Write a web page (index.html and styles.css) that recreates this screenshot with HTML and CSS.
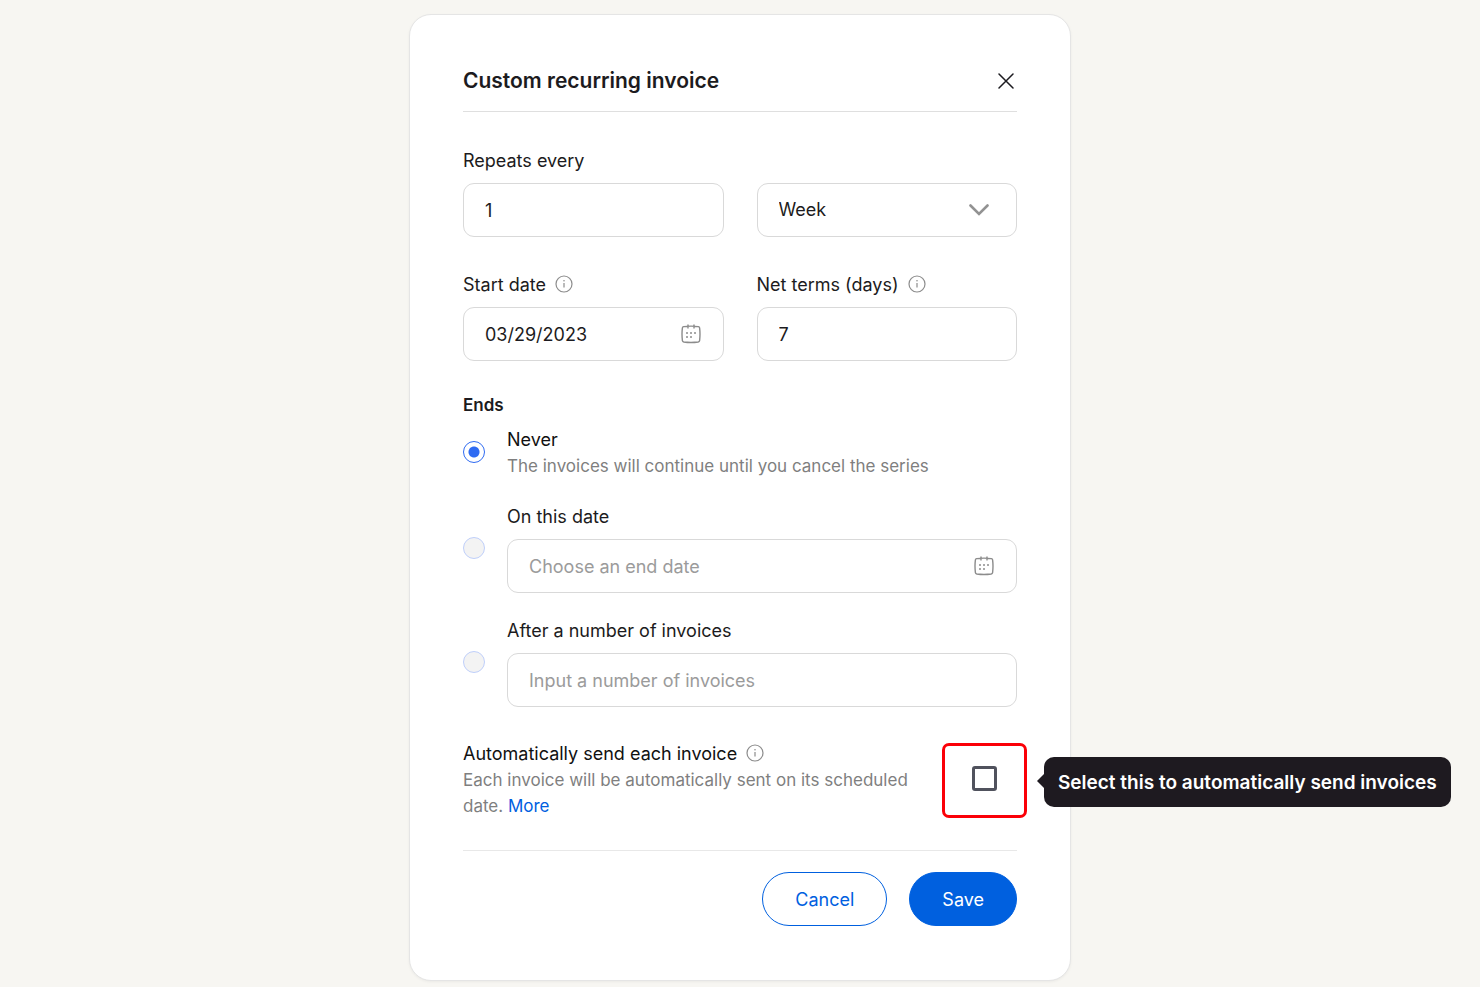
FILE: index.html
```html
<!DOCTYPE html>
<html lang="en">
<head>
    <meta charset="UTF-8">
    <meta name="viewport" content="width=device-width, initial-scale=1.0">
    <title>Custom recurring invoice</title>
    <link rel="stylesheet" href="styles.css">
</head>
<body>
    <svg class="sprite" aria-hidden="true">
        <symbol id="info" viewBox="0 0 18 18">
            <circle cx="9" cy="9" r="8" fill="none" stroke="currentColor" stroke-width="1.2"/>
            <path d="M9 8v4.6" stroke="currentColor" stroke-width="1.2"/>
            <circle cx="9" cy="5.8" r=".8" fill="currentColor"/>
        </symbol>
        <symbol id="calendar" viewBox="0 0 20 20">
            <path d="M2.6 2.6Q10 1.6 17.4 2.6Q18.4 2.8 18.6 3.8Q19.4 10 18.6 16.6Q18.4 17.8 17.2 18Q10 19 2.8 18Q1.6 17.8 1.4 16.6Q.6 10 1.4 3.8Q1.6 2.8 2.6 2.6ZM7 .5v4M13 .5v4" fill="none" stroke="currentColor" stroke-width="1.4"/>
            <g fill="currentColor">
                <circle cx="6" cy="9" r="1"/>
                <circle cx="10" cy="9" r="1"/>
                <circle cx="14" cy="9" r="1"/>
                <circle cx="6" cy="13" r="1"/>
                <circle cx="10" cy="13" r="1"/>
            </g>
        </symbol>
    </svg>

    <form class="modal">
        <header>
            <h1>Custom recurring invoice</h1>
            <button type="button" class="close" aria-label="Close">
                <svg width="16" height="16" viewBox="0 0 16 16"><path d="M1 1l14 14M15 1L1 15" stroke="currentColor" stroke-width="1.5" stroke-linecap="round"/></svg>
            </button>
        </header>

        <div class="row">
            <div class="field">
                <label for="every">Repeats every</label>
                <div class="box"><input type="text" id="every" value="1"></div>
            </div>
            <div class="field">
                <div class="box select-box">
                    <select id="unit" aria-label="Repeat unit">
                        <option>Week</option>
                        <option>Month</option>
                    </select>
                    <svg class="chevron" width="20" height="12" viewBox="0 0 20 12"><path d="M1.5 1.5L10 10l8.5-8.5" fill="none" stroke="currentColor" stroke-width="2.6" stroke-linecap="round"/></svg>
                </div>
            </div>
        </div>

        <div class="row">
            <div class="field">
                <label for="start">Start date <svg class="info"><use href="#info"/></svg></label>
                <div class="box">
                    <input type="text" id="start" value="03/29/2023">
                    <svg class="calendar"><use href="#calendar"/></svg>
                </div>
            </div>
            <div class="field">
                <label for="terms">Net terms (days) <svg class="info"><use href="#info"/></svg></label>
                <div class="box"><input type="text" id="terms" value="7"></div>
            </div>
        </div>

        <fieldset>
            <legend>Ends</legend>

            <div class="option">
                <input type="radio" name="ends" id="never" checked>
                <div class="text">
                    <label for="never">Never</label>
                    <p>The invoices will continue until you cancel the series</p>
                </div>
            </div>

            <div class="option">
                <input type="radio" name="ends" id="on-date" aria-label="On this date" disabled>
                <div class="field">
                    <label for="end-date">On this date</label>
                    <div class="box">
                        <input type="text" id="end-date" placeholder="Choose an end date">
                        <svg class="calendar"><use href="#calendar"/></svg>
                    </div>
                </div>
            </div>

            <div class="option">
                <input type="radio" name="ends" id="after" aria-label="After a number of invoices" disabled>
                <div class="field">
                    <label for="count">After a number of invoices</label>
                    <div class="box"><input type="text" id="count" placeholder="Input a number of invoices"></div>
                </div>
            </div>
        </fieldset>

        <div class="auto">
            <div class="text">
                <label for="auto-send">Automatically send each invoice <svg class="info"><use href="#info"/></svg></label>
                <p>Each invoice will be automatically sent on its scheduled date. <a href="#">More</a></p>
            </div>
            <div class="highlight">
                <input type="checkbox" id="auto-send">
                <div class="tooltip" role="tooltip">Select this to automatically send invoices</div>
            </div>
        </div>

        <footer>
            <button type="button" class="cancel">Cancel</button>
            <button type="submit" class="save">Save</button>
        </footer>
    </form>
</body>
</html>
```
FILE: styles.css
```css
* {
    box-sizing: border-box;
    padding: 0;
    margin: 0;
}

body {
    background: #f7f6f2;
    color: #1c1b20;
    font: 18px/24px Inter, "Liberation Sans", sans-serif;
    padding: 14px 0 6px;
}

input,
select,
button {
    font: inherit;
    color: inherit;
    background: none;
    border: none;
}

.sprite {
    display: none;
}

.modal {
    max-width: 662px;
    margin: auto;
    padding: 52px 53px 54px;
    background: #fff;
    border: 1px solid #e5e5e5;
    border-radius: 22px;
    box-shadow: 0 1px 3px rgba(0, 0, 0, .05);
}

header {
    display: flex;
    justify-content: space-between;
    align-items: center;
    padding-bottom: 16px;
    margin-bottom: 37px;
    border-bottom: 1px solid #dfdfdf;
}

h1 {
    font-size: 21px;
    font-weight: 600;
    line-height: 28px;
}

.close {
    display: flex;
    padding: 3px;
    cursor: pointer;
}

.row {
    display: flex;
    align-items: flex-end;
    gap: 33px;
    margin-bottom: 36px;
}

.field {
    flex: 1;
    min-width: 0;
}

.field label {
    display: block;
    margin-bottom: 10px;
}

.box {
    display: flex;
    align-items: center;
    height: 54px;
    padding-right: 22px;
    border: 1px solid #d9d9d9;
    border-radius: 11px;
}

.box input,
.box select {
    flex: 1;
    min-width: 0;
    height: 100%;
    padding-left: 21px;
    appearance: none;
}

::placeholder {
    color: #9b9b9b;
    opacity: 1;
}

.select-box {
    position: relative;
    padding-right: 0;
}

.chevron {
    position: absolute;
    right: 27px;
    color: #929292;
    pointer-events: none;
}

.info {
    width: 18px;
    height: 18px;
    margin-left: 4px;
    vertical-align: -2px;
    color: #8c8c8c;
}

.calendar {
    width: 20px;
    height: 20px;
    color: #8c8c8c;
}

fieldset {
    display: flex;
    flex-direction: column;
    gap: 26px;
    border: none;
    margin: -4px 0 34px;
}

legend {
    font-size: 17px;
    font-weight: 600;
    margin-bottom: 10px;
}

.option {
    display: flex;
    align-items: center;
    gap: 22px;
}

input[type="radio"] {
    appearance: none;
    width: 22px;
    height: 22px;
    margin-bottom: 3px;
    border: 1px solid #2f6bf2;
    border-radius: 50%;
}

input[type="radio"]:checked {
    background: radial-gradient(circle, #2f6bf2 5px, #fff 6px);
}

input[type="radio"]:disabled {
    background: #f3f3f3;
    border-color: #bfcffa;
}

.text {
    flex: 1;
    font-size: 17px;
    line-height: 26px;
    color: #7f7f7f;
}

.text label {
    font-size: 18px;
    color: #111;
}

.auto {
    display: flex;
    align-items: center;
    gap: 24px;
    margin-bottom: 31px;
}

a {
    color: #0060df;
    text-decoration: none;
}

.highlight {
    position: relative;
    display: flex;
    justify-content: center;
    align-items: center;
    width: 85px;
    height: 75px;
    margin-right: -10px;
    border: 3px solid #fb0007;
    border-radius: 7px;
}

input[type="checkbox"] {
    appearance: none;
    width: 25px;
    height: 25px;
    margin-bottom: 3px;
    border: 3px solid #50525d;
    border-radius: 3px;
}

.tooltip {
    position: absolute;
    left: 99px;
    top: 11px;
    padding: 14px 14px 12px;
    background: #1e1a20;
    color: #fff;
    font-size: 19px;
    font-weight: 600;
    white-space: nowrap;
    border-radius: 10px;
}

.tooltip::before {
    content: "";
    position: absolute;
    right: 100%;
    top: 17px;
    border: 7px solid transparent;
    border-left: none;
    border-right-color: #1e1a20;
}

footer {
    display: flex;
    justify-content: flex-end;
    gap: 22px;
    padding-top: 21px;
    border-top: 1px solid #e8e8e8;
}

footer button {
    height: 54px;
    padding: 1px 32px 0;
    border: 1px solid #0060df;
    border-radius: 27px;
    cursor: pointer;
}

.cancel {
    color: #0060df;
}

.save {
    background: #0060df;
    color: #fff;
}
```
